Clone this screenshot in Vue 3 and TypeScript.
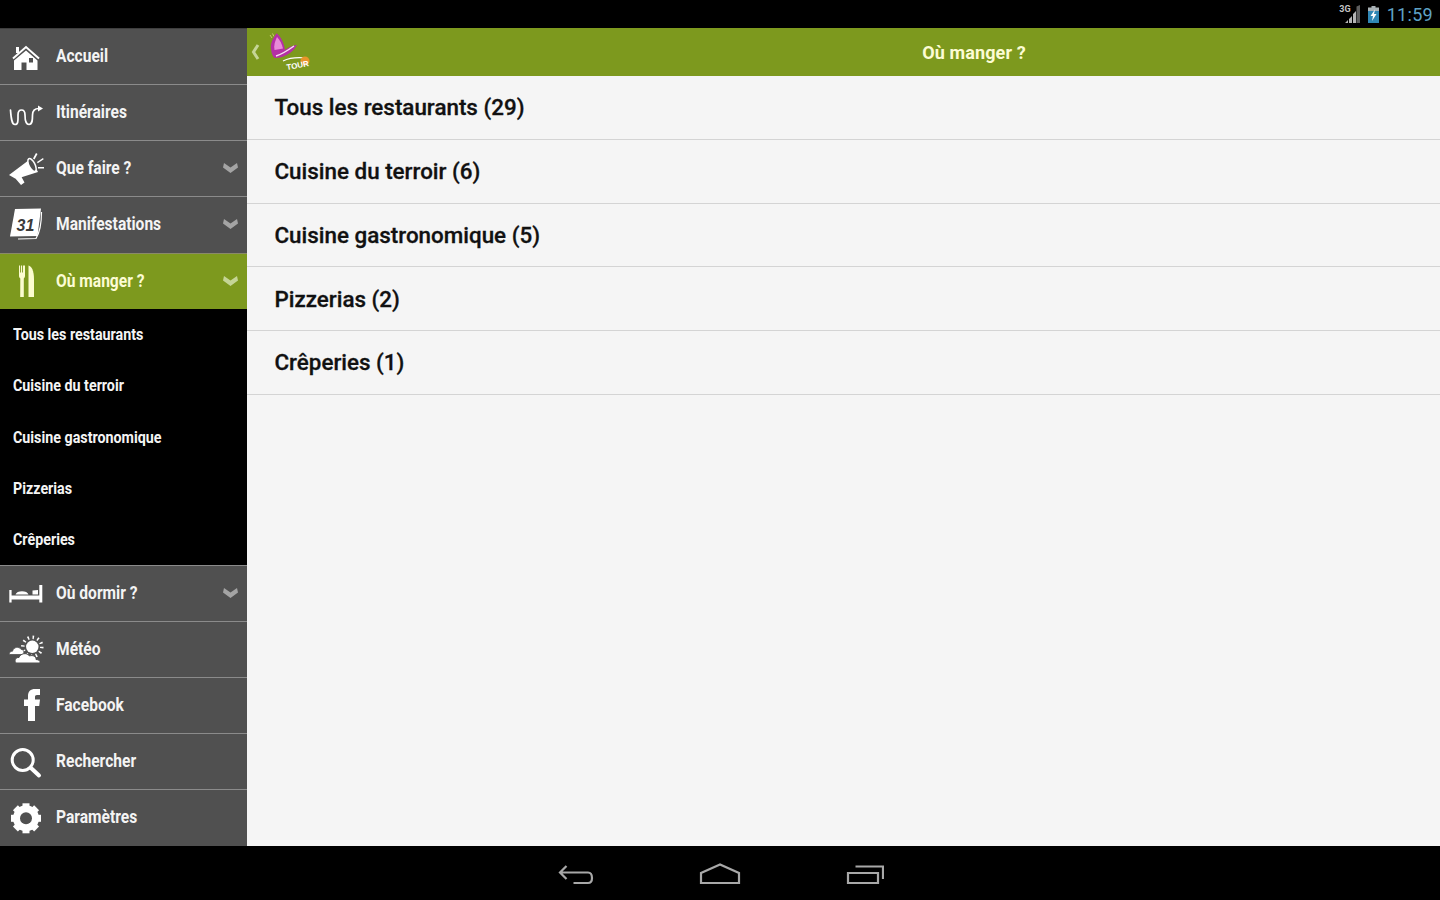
<template>
  <div class="screen">
    <header class="status-bar">
      <span class="net">3G</span>
      <svg class="signal" width="16" height="18" viewBox="0 0 16 18">
        <path d="M11.500 1.500L15 0v18h-3.500z" fill="#5e5e5e" />
        <path d="M0 18l3-3v3zM4 18v-4l3-3v7zM8 18V9l3-3v12z" fill="#b4b4b4" />
      </svg>
      <svg class="battery" width="11" height="17" viewBox="0 0 11 17">
        <path d="M3.500 0h4v1.500h3.500V6H0V1.500h3.500z" fill="#a9b2b6" />
        <path d="M0 5h11v12H0z" fill="#2f86b4" />
        <path d="M7 3.500L2.500 10H5l-1 5 4.500-7H6z" fill="#fff" />
      </svg>
      <span class="clock">11:59</span>
    </header>

    <div class="body">
      <aside class="sidebar">
        <template v-for="item in menu" :key="item.label">
          <div class="menu-item" :class="{ active: item.active }">
            <span class="menu-icon">
              <svg width="36" height="36" viewBox="0 0 36 36" fill="#fff">
                <g v-if="item.icon === 'home'">
                  <path d="M5 19.500L18 8l13 11.500" fill="none" stroke="#fff" stroke-width="2" />
                  <path d="M8 8h3v6H8z" />
                  <path d="M18 11.500l11.500 10V31H18.500v-7.500h-5V31H6v-9.500zM21 19v4.500h4V19z" fill-rule="evenodd" />
                </g>
                <g v-else-if="item.icon === 'route'">
                  <path d="M2.500 15C3 22 3.500 29.500 7 29.500s3-4.500 3-9.500c0-3 1-5 3.500-5s3.500 2 3.500 5c0 5 .5 9.500 4 9.500s3.500-4.500 3.500-9.500c0-4.500 2.500-6.500 6.500-6.500" fill="none" stroke="#fff" stroke-width="1.700" stroke-linecap="round" />
                  <path d="M30 10.500l5 3-5 3z" />
                </g>
                <g v-else-if="item.icon === 'horn'">
                  <path d="M1 24L23 7.500l7 13.500-22 7zM7 27l6-2 3.500 6.500-3.500 2.500z" />
                  <ellipse cx="24" cy="14" rx="3" ry="7" transform="rotate(-27 24 14)" fill="#505050" stroke="#fff" stroke-width="1.500" />
                  <path d="M25 7.500l3-5.500 1.500 1-3 5.500zM29 11l6-4 .7 1.300-6 4zM30 16h6.500v1.500H30z" />
                </g>
                <g v-else-if="item.icon === 'calendar'">
                  <path d="M2 29.500L7 2l26-.5L29.500 29z" />
                  <path d="M33.500 5c0 9-1.500 20-5.500 26.500L10 32" fill="none" stroke="#fff" stroke-width="1.200" />
                  <text x="8.500" y="24" class="cal-text">31</text>
                </g>
                <g v-else-if="item.icon === 'cutlery'" fill="#fcfcd0">
                  <path d="M11 2.500h1.100v7h.9v-7h1.100v7h.9v-7H17V13c0 1.200-.7 2-1.200 2.400L15.800 34h-3.600l.1-18.600C11.700 15 11 14.200 11 13z" />
                  <path d="M20.500 2.500c3 .5 5.500 5 5.500 14V34h-5.500z" />
                </g>
                <g v-else-if="item.icon === 'bed'">
                  <path d="M1.300 15h2.300v5.500h27.700V10h3v17.500h-3V24.500H3.600v3H1.300z" />
                  <path d="M7.500 19.500c1-4.500 12-4.500 13 0zM24.500 19.500v-4l5.500-.5v4.500z" />
                </g>
                <g v-else-if="item.icon === 'weather'">
                  <circle cx="24.300" cy="15.800" r="6.200" />
                  <circle cx="24.300" cy="15.800" r="9.500" fill="none" stroke="#fff" stroke-width="3.500" stroke-dasharray="1.500 3.470" />
                  <path d="M1.300 23.500c-.3-2 1.200-3.500 3.200-3.300C5.500 16 11 15 13.200 18.500c2-.5 3 2 2.500 5z" stroke="#505050" stroke-width=".8" />
                  <path d="M8 32c-2-2-.5-6 3-5.500 1-4 8-5.500 10.500-1.500 3.500-1.500 7 1 6.500 3.500 3 0 4.500 1.500 4 3.500z" stroke="#505050" stroke-width="1" />
                </g>
                <path v-else-if="item.icon === 'facebook'" d="M20 34V19h-4v-6.500h4V9c0-4.500 2.500-7 7-7h5v6h-3c-1.500 0-2 .8-2 2v2.500h5l-.8 6.500H27v15z" />
                <g v-else-if="item.icon === 'search'">
                  <circle cx="14.700" cy="16" r="10.500" fill="none" stroke="#fff" stroke-width="3" />
                  <path d="M23 24l8 7.500" stroke="#fff" stroke-width="4" stroke-linecap="round" />
                </g>
                <g v-else-if="item.icon === 'gear'">
                  <circle cx="18" cy="18.300" r="9.500" fill="none" stroke="#fff" stroke-width="7" />
                  <path v-for="deg in [0, 45, 90, 135]" :key="deg" d="M14.500 3.300h7v30h-7z" :transform="`rotate(${deg} 18 18.300)`" />
                  <circle cx="18" cy="18.300" r="6" fill="#505050" />
                </g>
              </svg>
            </span>
            <span class="menu-label">{{ item.label }}</span>
            <svg v-if="item.chevron" class="chevron" width="15" height="10" viewBox="0 0 15 10">
              <path d="M1 0l6.500 4.500L14 0l1 4.500L7.500 10 0 4.500z" />
            </svg>
          </div>
          <div v-if="item.active" class="submenu">
            <div v-for="sub in categories" :key="sub.name" class="submenu-item">
              <span class="submenu-label">{{ sub.name }}</span>
            </div>
          </div>
        </template>
      </aside>

      <main class="content">
        <div class="action-bar">
          <svg class="back" width="9" height="16" viewBox="0 0 9 16">
            <path d="M7 1L2.500 8 7 15" fill="none" stroke="#c5d596" stroke-width="3" />
          </svg>
          <svg class="logo" width="44" height="44" viewBox="0 0 44 44">
            <path d="M1 5l2 3M3.500 3.500l1.500 3" stroke="#c9c86a" stroke-width="1" />
            <path d="M7.700 3.300C4 8 1 14 2 19c.5 5 2 8 4 9 5 0 11-2 15-5 3-2 5-5 7-8-4 .5-8 2-12 5C15 13 12 7 7.700 3.300z" fill="#b52fa6" />
            <path d="M8 7c-2 4-3.500 9-2.500 13 3-.5 6-1 8.500-1.500C13 14 11 10 8 7z" fill="#e88bd8" />
            <path d="M7 26c5-1.500 11-5 18-10" fill="none" stroke="#f6e3f2" stroke-width="1.400" />
            <path d="M14 31c6-3 14-4 23-3" fill="none" stroke="#fff" stroke-width="1.200" />
            <circle cx="36" cy="31" r="4.500" fill="#e8952a" />
            <text x="18" y="40" class="logo-text" transform="rotate(-10 18 40)">TOUR</text>
          </svg>
          <h1 class="title">Où manger ?</h1>
        </div>
        <ul class="list">
          <li v-for="cat in listRows" :key="cat" class="list-row">{{ cat }}</li>
        </ul>
      </main>
    </div>

    <footer class="nav-bar">
      <svg width="38" height="22" viewBox="0 0 38 22" fill="none" stroke="#a8a8a8" stroke-width="2.200">
        <path d="M9.500 3L3 9.500 9.500 16M3 9.500h28c3 0 4 2.500 4 5.500s-1.500 5-4 5H16.500" />
      </svg>
      <svg width="42" height="22" viewBox="0 0 42 22" fill="none" stroke="#a8a8a8" stroke-width="2.200">
        <path d="M21 1.500L2 10v10h38V10z" />
      </svg>
      <svg width="38" height="22" viewBox="0 0 38 22" fill="none" stroke="#a8a8a8" stroke-width="2.200">
        <path d="M2 10h30v10H2zM9.500 3.500H37V16" />
      </svg>
    </footer>
  </div>
</template>

<script setup lang="ts">
interface MenuItem {
  label: string;
  icon: string;
  chevron?: boolean;
  active?: boolean;
}

const menu: MenuItem[] = [
  { label: "Accueil", icon: "home" },
  { label: "Itinéraires", icon: "route" },
  { label: "Que faire ?", icon: "horn", chevron: true },
  { label: "Manifestations", icon: "calendar", chevron: true },
  { label: "Où manger ?", icon: "cutlery", chevron: true, active: true },
  { label: "Où dormir ?", icon: "bed", chevron: true },
  { label: "Météo", icon: "weather" },
  { label: "Facebook", icon: "facebook" },
  { label: "Rechercher", icon: "search" },
  { label: "Paramètres", icon: "gear" },
];

const categories = [
  { name: "Tous les restaurants", count: 29 },
  { name: "Cuisine du terroir", count: 6 },
  { name: "Cuisine gastronomique", count: 5 },
  { name: "Pizzerias", count: 2 },
  { name: "Crêperies", count: 1 },
];

const listRows = categories.map((c) => `${c.name} (${c.count})`);
</script>

<style>
html,
body {
  margin: 0;
  background: #000;
}
</style>

<style scoped>
.screen {
  width: 1440px;
  height: 900px;
  display: flex;
  flex-direction: column;
  overflow: hidden;
  font-family: Roboto, sans-serif;
}
.status-bar {
  height: 28px;
  background: #000;
  display: flex;
  align-items: center;
  justify-content: flex-end;
  padding-right: 7px;
}
.net {
  color: #c4c4c4;
  font-size: 9px;
  font-weight: 700;
  margin: 0 -6px 11px 0;
}
.signal {
  margin: 0 7px 0 0;
}
.battery {
  margin: 0 8px 0 0;
}
.clock {
  color: #5fa2c6;
  font-size: 18px;
  letter-spacing: 0.3px;
}
.body {
  flex: 1;
  display: flex;
  min-height: 0;
}
.sidebar {
  width: 247px;
  flex: none;
  background: #505050;
  display: flex;
  flex-direction: column;
}
.menu-item {
  height: 56.15px;
  box-sizing: border-box;
  flex: none;
  display: flex;
  align-items: center;
  border-top: 1px solid #8b8b8b;
  position: relative;
}
.menu-item:first-child {
  border-top-color: #3e3e3e;
}
.menu-item.active {
  background: #7d991e;
  border-top-color: #8a8a6a;
}
.menu-icon {
  width: 36px;
  height: 36px;
  margin-left: 8px;
  flex: none;
}
.menu-label {
  margin: 0 0 2px 12px;
  color: #f4f4f4;
  font-size: 18px;
  font-weight: 700;
  white-space: nowrap;
  transform: scaleX(0.865);
  transform-origin: left center;
}
.active .menu-label {
  color: #fcfcd4;
}
.chevron {
  position: absolute;
  right: 9.5px;
  top: calc(50% - 5.5px);
  fill: #a4a4a4;
}
.active .chevron {
  fill: #c5d596;
}
.cal-text {
  font-family: "Liberation Sans", sans-serif;
  font-size: 16px;
  font-weight: 700;
  font-style: italic;
  fill: #3a3a3a;
}
.submenu {
  background: #000;
  flex: none;
}
.submenu-item {
  height: 51.2px;
  display: flex;
  align-items: center;
  padding-left: 13.2px;
}
.submenu-label {
  color: #f4f4f4;
  font-size: 17px;
  font-weight: 700;
  white-space: nowrap;
  transform: scaleX(0.84);
  transform-origin: left center;
}
.content {
  flex: 1;
  display: flex;
  flex-direction: column;
  background: #f5f5f5;
}
.action-bar {
  height: 48px;
  flex: none;
  background: #7d991e;
  display: flex;
  align-items: center;
  position: relative;
}
.back {
  margin-left: 4px;
}
.logo {
  margin-left: 9px;
  overflow: visible;
}
.logo-text {
  font-family: "Liberation Sans", sans-serif;
  font-size: 8px;
  font-weight: 700;
  fill: #fff;
}
.title {
  position: absolute;
  left: 0;
  right: 0;
  margin: 0;
  padding-left: 261px;
  text-align: center;
  color: #fcfcd4;
  font-size: 18px;
  font-weight: 700;
  letter-spacing: 0.1px;
}
.list {
  list-style: none;
  margin: 0;
  padding: 0;
}
.list-row {
  height: 63.75px;
  box-sizing: border-box;
  padding-left: 27.5px;
  display: flex;
  align-items: center;
  border-bottom: 1px solid #d4d4d4;
  color: #111;
  font-size: 22.4px;
  font-weight: 500;
  -webkit-text-stroke: 0.3px #111;
}
.nav-bar {
  height: 54px;
  flex: none;
  background: #000;
  display: flex;
  align-items: center;
  justify-content: center;
  gap: 104.5px;
  padding-top: 1px;
  box-sizing: border-box;
}
</style>
